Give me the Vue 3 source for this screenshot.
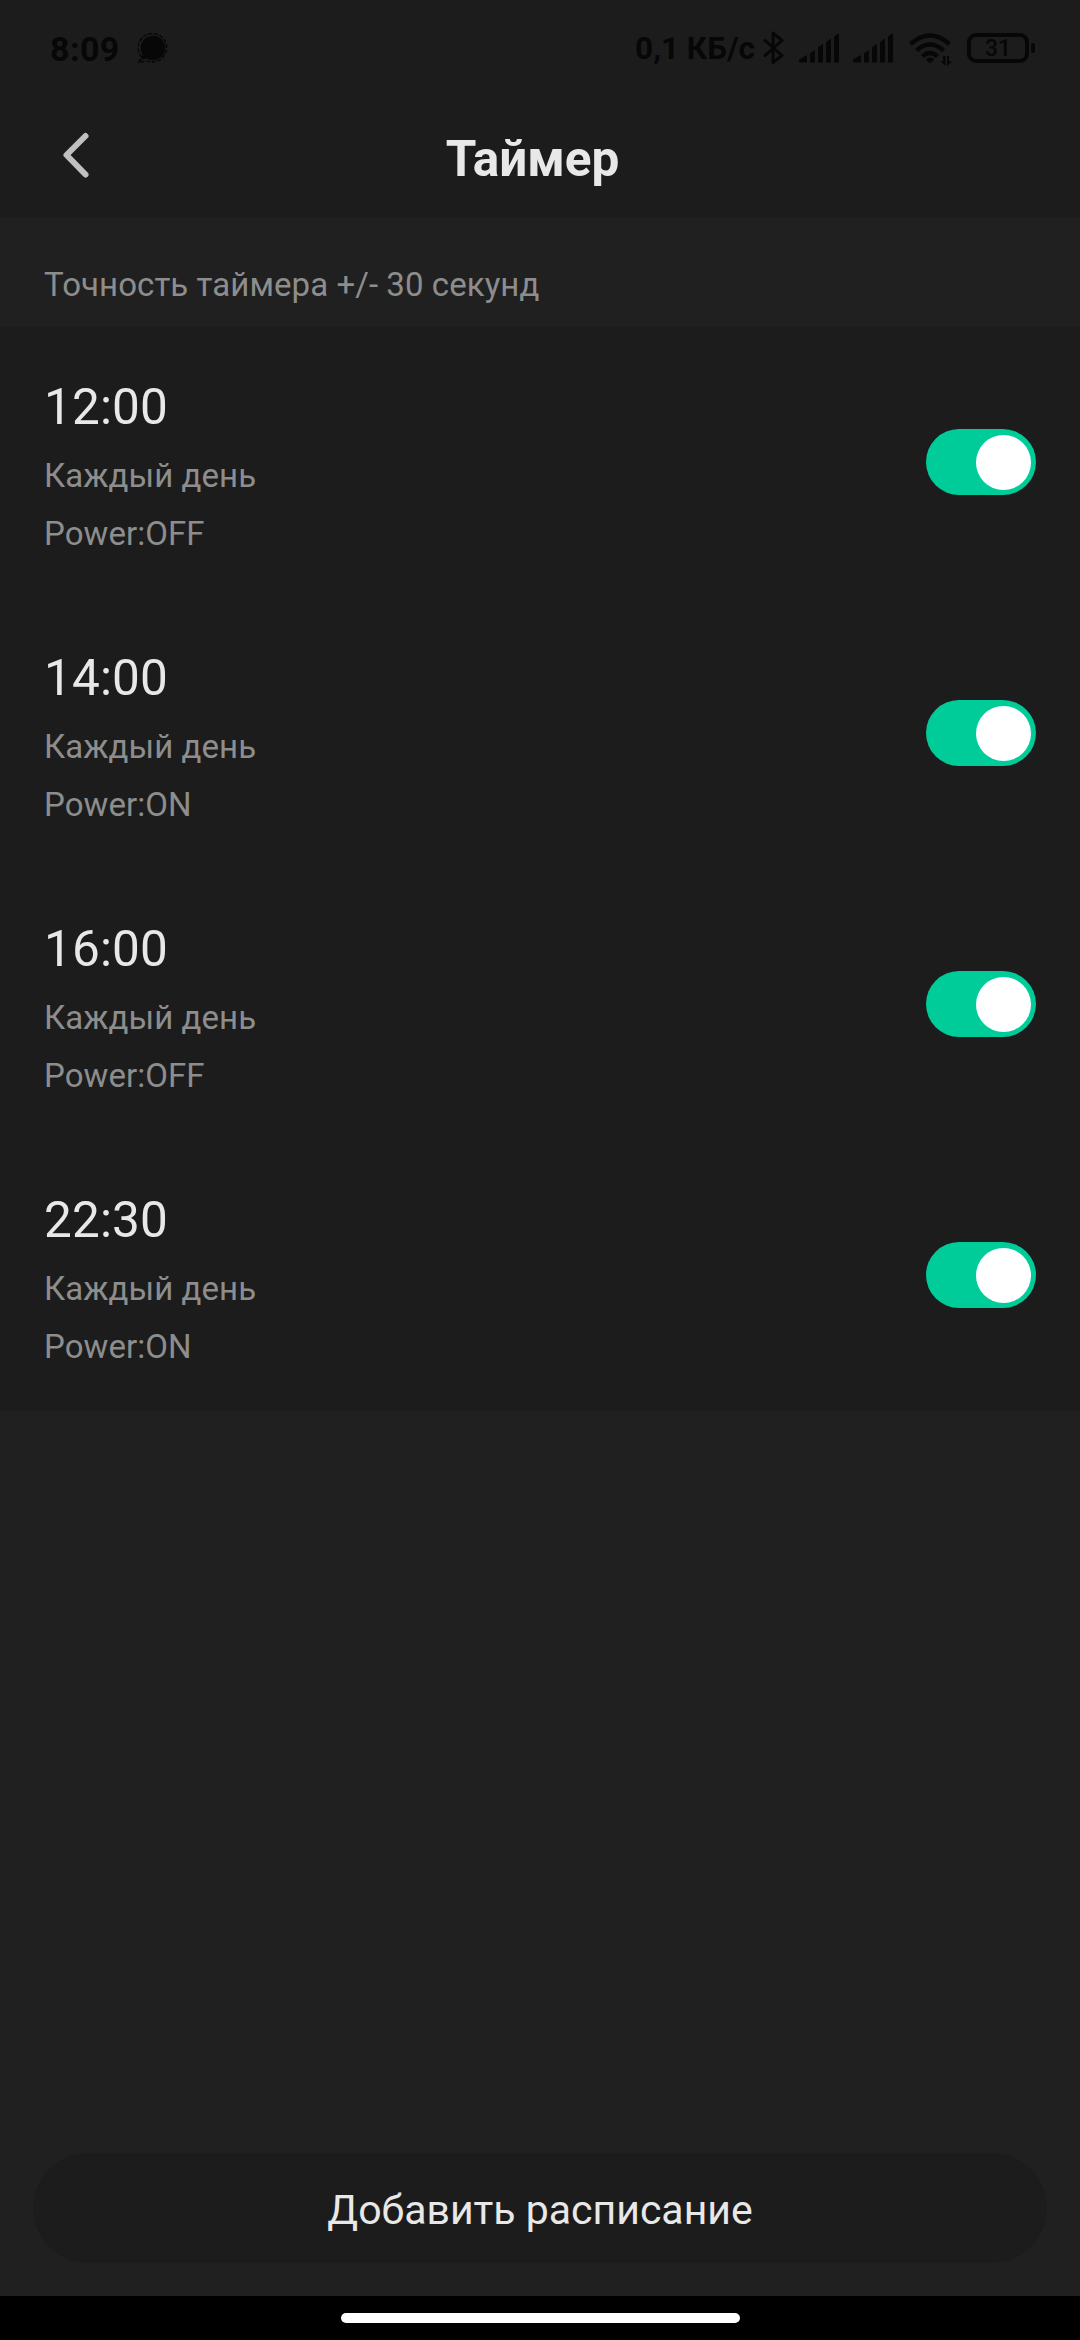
<template>
  <div class="timer-page">
    <!-- 状态栏 -->
    <div class="status-bar">
      <span class="clock">8:09</span>
      <svg class="signal-app" width="30" height="30" viewBox="0 0 30 30">
        <path d="M3.6 24A14.2 14.2 0 1 1 9 27.9L0.9 29.2z" fill="none" stroke="#070707" stroke-width="1.5" stroke-dasharray="4 1.6" />
        <path d="M15 2.8a12.2 12.2 0 1 1-6.2 22.7L3.2 26.8L4.6 21.4A12.2 12.2 0 0 1 15 2.8z" fill="#070707" />
      </svg>
      <span class="net-speed">0,1 КБ/с</span>
      <svg class="bluetooth" width="22" height="36" viewBox="0 0 22 36">
        <path d="M2 10.5L19 25.5L10 32.5V3L19 10.5L2 25.5" />
      </svg>
      <svg v-for="n in 2" :key="n" class="cell" width="41" height="30" viewBox="0 0 41 30">
        <path d="M0 26.5L8 22V29.5H1.5Q0 29.5 0 28z" />
        <path d="M11 20.2L16 16.9V29.5H11z" />
        <path d="M19 14.2L24 10.9V29.5H19z" />
        <path d="M27 8.9L32 5.6V29.5H27z" />
        <path d="M35 3.6L40 .3V29.5H35z" />
      </svg>
      <svg class="wifi" width="44" height="34" viewBox="0 0 44 34">
        <g fill="none" stroke="#070707" stroke-width="4.4">
          <path d="M1.5 11Q21 -6 40.5 11" />
          <path d="M7.5 17.5Q21 5.5 34.5 17.5" />
          <path d="M13.5 23.5Q21 16.5 28.5 23.5" />
        </g>
        <path d="M16.8 26.5Q21 22.5 25.2 26.5L21 30.5z" />
        <path d="M34 23H36.4V33L31.5 28H34zM38 33V23H40V28.5H43L38 33z" />
      </svg>
      <div class="battery">
        <span class="battery-body">31</span>
        <span class="battery-cap"></span>
      </div>
    </div>

    <!-- 标题栏 -->
    <header class="nav-bar">
      <svg class="back" width="30" height="48" viewBox="0 0 30 48">
        <path d="M25.5 5L6.5 24L25.5 43.5" />
      </svg>
      <h1 class="title">Таймер</h1>
    </header>

    <p class="hint">Точность таймера +/- 30 секунд</p>

    <!-- 定时列表 -->
    <ul class="timer-list">
      <li v-for="item in timers" :key="item.time" class="timer-item">
        <div class="info">
          <div class="time">{{ item.time }}</div>
          <div class="repeat">{{ item.repeat }}</div>
          <div class="action">Power:{{ item.power }}</div>
        </div>
        <button
          class="switch"
          :class="{ on: item.enabled }"
          @click="item.enabled = !item.enabled"
        >
          <span class="knob"></span>
        </button>
      </li>
    </ul>

    <button class="add-btn">Добавить расписание</button>
    <div class="home-bar"><span class="home-indicator"></span></div>
  </div>
</template>

<script setup>
import { ref } from 'vue'

const timers = ref([
  { time: '12:00', repeat: 'Каждый день', power: 'OFF', enabled: true },
  { time: '14:00', repeat: 'Каждый день', power: 'ON', enabled: true },
  { time: '16:00', repeat: 'Каждый день', power: 'OFF', enabled: true },
  { time: '22:30', repeat: 'Каждый день', power: 'ON', enabled: true },
])
</script>

<style>
body {
  margin: 0;
  background: #202020;
}
</style>

<style scoped>
.timer-page {
  display: flex;
  flex-direction: column;
  width: 1080px;
  height: 2340px;
  overflow: hidden;
  background: #202020;
  color: #e8e8e8;
  font-family: Roboto, 'Noto Sans', sans-serif;
}

button {
  border: none;
  padding: 0;
  font-family: inherit;
  color: inherit;
}

.status-bar {
  display: flex;
  align-items: flex-start;
  box-sizing: border-box;
  height: 96px;
  padding: 0 45px 0 50px;
  background: #1c1c1c;
  color: #070707;
  fill: #070707;
  white-space: nowrap;
}

.clock {
  margin-top: 29px;
  width: 88px;
  font-size: 34px;
  line-height: 40px;
  font-weight: 700;
  letter-spacing: 0.4px;
}

.signal-app {
  margin-top: 33px;
}

.net-speed {
  margin: 29px 8px 0 auto;
  font-size: 31.5px;
  line-height: 40px;
  font-weight: 700;
}

.bluetooth {
  margin: 30px 14px 0 0;
  fill: none;
  stroke: #070707;
  stroke-width: 3;
  stroke-linejoin: round;
  stroke-linecap: round;
}

.cell {
  margin: 33px 13px 0 0;
}

.wifi {
  margin: 33px 14px 0 2px;
}

.battery {
  display: flex;
  align-items: center;
  gap: 2px;
  margin-top: 33px;
}

.battery-body {
  box-sizing: border-box;
  width: 62px;
  height: 30px;
  border: 4px solid #070707;
  border-radius: 9px;
  font-size: 23px;
  line-height: 24px;
  font-weight: 500;
  text-align: center;
}

.battery-cap {
  width: 4px;
  height: 10px;
  border-radius: 2px;
  background: #070707;
}

.nav-bar {
  display: flex;
  align-items: flex-start;
  height: 121px;
  background: #1c1c1c;
}

.back {
  margin: 35px 0 0 60px;
  fill: none;
  stroke: #c0c0c0;
  stroke-width: 6;
  stroke-linecap: round;
  stroke-linejoin: round;
}

.title {
  flex: 1;
  margin: 34px 105px 0 0;
  font-size: 49.5px;
  line-height: 58px;
  font-weight: 700;
  text-align: center;
}

.hint {
  box-sizing: border-box;
  height: 110px;
  margin: 0;
  padding: 48px 44px 0;
  color: #8d8d8d;
  font-size: 33px;
  line-height: 39px;
  letter-spacing: 0.07px;
}

.timer-list {
  margin: 0;
  padding: 0;
  list-style: none;
  background: #1c1c1c;
}

.timer-item {
  display: flex;
  align-items: center;
  justify-content: space-between;
  box-sizing: border-box;
  height: 271px;
  padding: 0 44px 1px;
}

.info {
  padding: 7px 0 0;
  color: #8d8d8d;
  font-size: 33px;
  line-height: 39px;
  letter-spacing: 0.05px;
}

.time {
  margin-bottom: 20px;
  color: #e8e8e8;
  font-size: 49.5px;
  line-height: 58px;
  letter-spacing: 0.15px;
}

.repeat {
  margin-bottom: 19px;
}

.switch {
  display: flex;
  align-items: center;
  box-sizing: border-box;
  width: 110px;
  height: 66px;
  padding: 0 5.5px;
  border-radius: 33px;
  background: #555;
}

.switch.on {
  justify-content: flex-end;
  background: #00cc99;
}

.knob {
  width: 55px;
  height: 55px;
  border-radius: 50%;
  background: #fff;
}

.add-btn {
  box-sizing: border-box;
  height: 110px;
  margin: auto 33px 33px;
  padding-top: 4px;
  border-radius: 55px;
  background: #1c1c1c;
  font-size: 41px;
}

.home-bar {
  display: flex;
  justify-content: center;
  align-items: center;
  height: 44px;
  background: #000;
}

.home-indicator {
  width: 399px;
  height: 10px;
  border-radius: 5px;
  background: #fff;
}
</style>
